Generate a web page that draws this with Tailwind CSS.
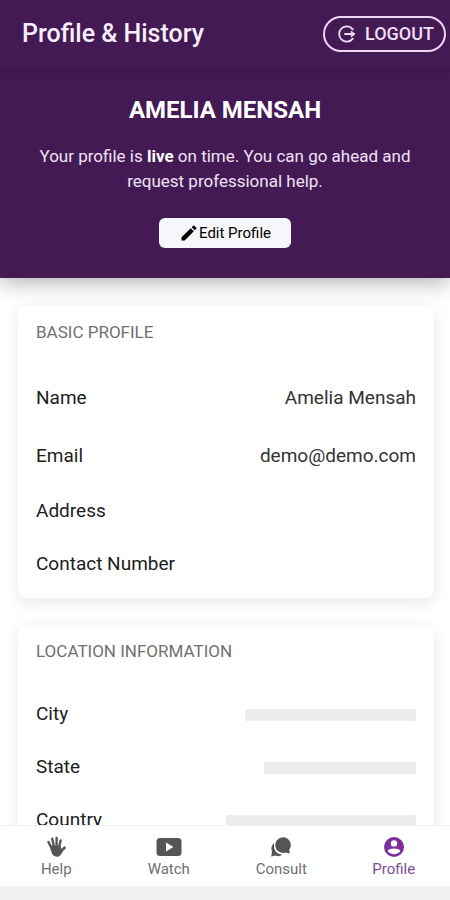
<!DOCTYPE html>
<html lang="en">
<head>
  <meta charset="UTF-8" />
  <meta name="viewport" content="width=device-width, initial-scale=1.0">
  <title>Profile &amp; History</title>
  <script src="https://cdn.jsdelivr.net/npm/@tailwindcss/browser@4"></script>
</head>
<body class="h-screen flex flex-col bg-[#f0f0f0] font-['Roboto',sans-serif] text-[#1c1c1c]">

  <!-- Toolbar -->
  <header class="relative z-20 shrink-0 flex items-center justify-between h-[68px] pl-[22px] pr-1 bg-[#431a54] text-[#f8eefc] shadow-[0_1px_5px_rgba(50,15,50,0.5)]">
    <h1 class="text-[25px] font-medium">Profile &amp; History</h1>
    <button type="button" class="flex items-center gap-2 h-9 pl-3 pr-[10px] rounded-full border-2 border-[#ecd6f2] text-[#f2dff6] text-lg font-medium">
      <svg class="w-5 h-5" viewBox="0 0 20 20" fill="none" stroke="currentColor" stroke-width="1.8" stroke-linecap="round" stroke-linejoin="round">
        <path d="M15.8 5.4A7.6 7.6 0 1 0 15.8 14.6" />
        <path d="M8 10H17" />
        <path d="M14.6 7.4L17.8 10L14.6 12.6Z" fill="currentColor" stroke-width="1" />
      </svg>
      LOGOUT
    </button>
  </header>

  <main class="flex-1 min-h-0 overflow-hidden bg-white">

    <!-- Profile summary -->
    <section class="relative z-10 flex flex-col items-center px-8 pt-6 pb-[30px] bg-[#431a54] text-center shadow-[0_3px_22px_rgba(0,0,0,0.35)]">
      <h2 class="text-2xl leading-9 font-bold text-white">AMELIA MENSAH</h2>
      <p class="mt-4 text-[17px] leading-[25px] text-[#f0e2f4]">Your profile is <strong class="text-white">live</strong> on time. You can go ahead and request professional help.</p>
      <button type="button" class="mt-6 flex items-center justify-center h-[30px] px-5 rounded-md bg-[#f6f7fa] text-[15px] text-black">
        <svg class="w-5 h-5" viewBox="0 0 24 24" fill="currentColor">
          <path d="M3 17.2V21h3.8L17.8 9.9l-3.7-3.7L3 17.2zM20.7 7a1 1 0 0 0 0-1.4l-2.3-2.3a1 1 0 0 0-1.4 0l-1.8 1.8 3.7 3.7L20.7 7z" />
        </svg>
        Edit Profile
      </button>
    </section>

    <div class="pl-[18px] pr-4 pt-7 space-y-[27px]">

      <!-- Basic profile -->
      <section class="relative z-10 px-[18px] pb-[7px] rounded-lg bg-white shadow-[0_4px_16px_rgba(0,0,0,0.1)]">
        <h3 class="pb-[11px] text-[17px] leading-[52px] text-[#707070]">BASIC PROFILE</h3>
        <dl class="text-[19px]">
          <div class="flex items-center justify-between h-[58px]">
            <dt>Name</dt>
            <dd class="text-[#333]">Amelia Mensah</dd>
          </div>
          <div class="flex items-center justify-between h-[58px]">
            <dt>Email</dt>
            <dd class="text-[#333]">demo@demo.com</dd>
          </div>
          <div class="flex items-center justify-between h-[53px]">
            <dt>Address</dt>
            <dd></dd>
          </div>
          <div class="flex items-center justify-between h-[53px]">
            <dt>Contact Number</dt>
            <dd></dd>
          </div>
        </dl>
      </section>

      <!-- Location information, still loading -->
      <section class="px-[18px] pb-[7px] rounded-lg bg-white shadow-[0_4px_16px_rgba(0,0,0,0.1)]">
        <h3 class="pb-[11px] text-[17px] leading-[52px] text-[#707070]">LOCATION INFORMATION</h3>
        <dl class="text-[19px]">
          <div class="flex items-center justify-between h-[53px]">
            <dt>City</dt>
            <dd class="w-[45%] h-3 rounded-xs bg-[#ececec]"></dd>
          </div>
          <div class="flex items-center justify-between h-[53px]">
            <dt>State</dt>
            <dd class="w-[40%] h-3 rounded-xs bg-[#ececec]"></dd>
          </div>
          <div class="flex items-center justify-between h-[53px]">
            <dt>Country</dt>
            <dd class="w-[50%] h-3 rounded-xs bg-[#ececec]"></dd>
          </div>
        </dl>
      </section>

    </div>
  </main>

  <!-- Tab bar -->
  <nav class="relative z-20 shrink-0 grid grid-cols-4 h-[61px] mb-[14px] pt-[9px] bg-white border-t border-[#f0f0f0] text-[15px] leading-5 text-[#707070]">
    <a href="#help" class="flex flex-col items-center">
      <svg class="w-6 h-6" viewBox="0 0 24 24" fill="none" stroke="#555" stroke-linecap="round" stroke-linejoin="round">
        <path d="M7 12L4.4 7M9.8 11L8.2 3.8M12.6 11L12.6 3M15.2 12L16.6 5.4" stroke-width="2.4" />
        <path d="M16 16.8L20.6 12.8" stroke-width="2.7" />
        <path d="M6.8 11.8L15.6 11.4L16.6 15.6L18.4 14.6C17.4 17.6 15.8 20.8 12.8 20.8C9.4 20.8 8.4 17.4 6.8 11.8Z" fill="#555" stroke-width="2" />
      </svg>
      Help
    </a>
    <a href="#watch" class="flex flex-col items-center">
      <svg class="w-[26px] h-6" viewBox="0 0 26 24">
        <rect x="0.5" y="3" width="25" height="18" rx="3.5" fill="#555" />
        <path d="M10 7.6L17.4 12L10 16.4Z" fill="white" />
      </svg>
      Watch
    </a>
    <a href="#consult" class="flex flex-col items-center">
      <svg class="w-6 h-6" viewBox="0 0 24 24" fill="#555">
        <path d="M5 8C2.4 10.4 1.8 13.6 3 16.4L2.2 21.6L6.8 20.6C8.8 21.6 11.4 21.2 13.2 19.6C8.4 19.4 5 15.6 5 11Z" />
        <path d="M14 2.2A7.9 7.9 0 1 0 16.6 17.6L20.8 18.4L20.2 14.8A7.9 7.9 0 0 0 14 2.2Z" />
      </svg>
      Consult
    </a>
    <a href="#profile" class="flex flex-col items-center text-[#7d4d93]">
      <svg class="w-6 h-6" viewBox="0 0 24 24">
        <circle cx="12" cy="12" r="10" fill="#7c2e9c" />
        <circle cx="12" cy="8.4" r="3.2" fill="white" />
        <path d="M5.6 16C7.4 12.8 16.6 12.8 18.4 16C15.4 20.2 8.6 20.2 5.6 16Z" fill="white" />
      </svg>
      Profile
    </a>
  </nav>

</body>
</html>
